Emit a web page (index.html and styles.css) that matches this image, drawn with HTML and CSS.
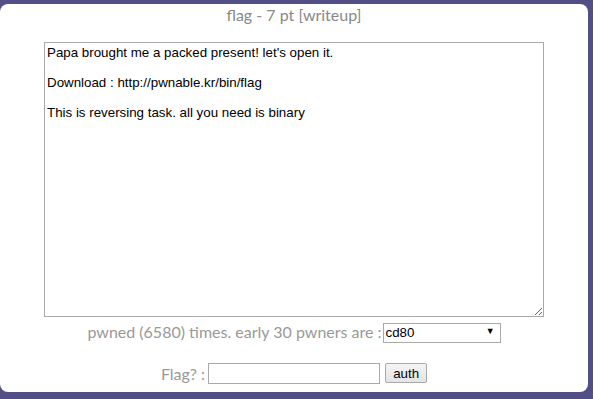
FILE: index.html
```html
<!DOCTYPE html>
<html lang="en">
<head>
    <meta charset="UTF-8">
    <title>flag</title>
    <link rel="stylesheet" href="styles.css">
</head>
<body>
    <div class="panel">
        <h3 class="title">flag - 7 pt [writeup]</h3>
        <textarea class="desc" spellcheck="false">Papa brought me a packed present! let's open it.

Download : http://pwnable.kr/bin/flag

This is reversing task. all you need is binary
</textarea>
        <div class="row pwned">
            <span>pwned (6580) times. early 30 pwners are :</span>
            <span class="pick">
                <select class="pwners">
                    <option>cd80</option>
                </select>
            </span>
        </div>
        <div class="row auth">
            <span>Flag? :</span>
            <input type="text" class="flagip">
            <button class="authbtn">auth</button>
        </div>
    </div>
</body>
</html>
```

FILE: styles.css
```css
body
{
    margin: 0;
    background: #524f87;
    padding: 4px 5px 7px 0;
    font-family: Lato, "Open Sans", sans-serif;
}
.panel
{
    background: #fff;
    border-radius: 8px;
    height: 388px;
    display: flex;
    flex-direction: column;
    align-items: center;
    box-sizing: border-box;
    padding-top: 1px;
}
.title
{
    margin: 0;
    font-size: 16px;
    font-weight: 400;
    color: #888;
    line-height: 20px;
}
.desc
{
    margin-top: 17px;
    width: 500px;
    height: 275px;
    box-sizing: border-box;
    border: 1px solid #a9a9a9;
    padding: 2px;
    font-family: "Liberation Sans", Arial, sans-serif;
    font-size: 13.33px;
    line-height: 15px;
    color: #000;
    resize: both;
    outline: 0;
}
.row
{
    display: flex;
    align-items: center;
    color: #999;
    font-size: 16px;
}
.pwned
{
    margin-top: 4px;
    gap: 1px;
}
.pick
{
    position: relative;
    display: inline-block;
}
.pick::after
{
    content: "\25BC";
    position: absolute;
    right: 6px;
    top: 4px;
    font-size: 9px;
    color: #000;
    pointer-events: none;
}
.pwners
{
    appearance: none;
    width: 118px;
    height: 20px;
    border: 1px solid #a9a9a9;
    border-radius: 0;
    background: #fff;
    font-family: "Liberation Sans", Arial, sans-serif;
    font-size: 13.33px;
    padding: 0 2px;
    color: #000;
}
.auth
{
    margin-top: 20px;
    gap: 3px;
}
.flagip
{
    width: 172px;
    height: 21px;
    box-sizing: border-box;
    border: 1px solid #a9a9a9;
    margin: 0;
}
.authbtn
{
    margin-left: 2px;
    width: 42px;
    height: 20px;
    border: 1px solid #a9a9a9;
    border-radius: 2px;
    background: linear-gradient(#f4f4f4, #e4e4e4);
    font-family: "Liberation Sans", Arial, sans-serif;
    font-size: 13.33px;
    padding: 0;
    color: #000;
}
```
